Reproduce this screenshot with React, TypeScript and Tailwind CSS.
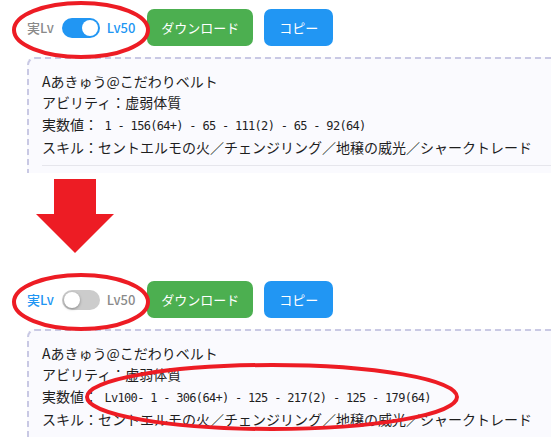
import React from 'react';

type PanelProps = {
  realLv: boolean;
  stats: string;
  height: string;
  statsMark?: boolean;
};

const ring = '#ed1c24';

function Toggle({ on }: { on: boolean }) {
  return (
    <div
      className={
        'relative h-[20px] w-[38px] rounded-full ' + (on ? 'bg-[#2196f3]' : 'bg-[#cccccc]')
      }
    >
      <div
        className={
          'absolute top-[2px] h-[16px] w-[16px] rounded-full bg-white ' +
          (on ? 'left-[20px]' : 'left-[2px] shadow-[0_1px_3px_rgba(0,0,0,0.35)]')
        }
      />
    </div>
  );
}

function Panel({ realLv, stats, height, statsMark }: PanelProps) {
  // toggle "on" = Lv50 shown
  const on = !realLv;
  return (
    <div className={'relative w-[551px] overflow-hidden ' + height}>
      <div className="flex items-center pl-[27px] pt-[9px]">
        <span
          className={
            'text-[13px] font-medium leading-[20px] ' + (realLv ? 'text-[#2196f3]' : 'text-[#8a8a8a]')
          }
        >
          実Lv
        </span>
        <div className="ml-[8px]">
          <Toggle on={on} />
        </div>
        <span
          className={
            'ml-[7px] text-[13px] font-medium leading-[20px] ' + (on ? 'text-[#2196f3]' : 'text-[#8a8a8a]')
          }
        >
          Lv50
        </span>
        <button className="ml-[12px] h-[37px] rounded-[7px] bg-[#4caf50] px-[14px] text-[13px] text-white">
          ダウンロード
        </button>
        <button className="ml-[11px] h-[37px] rounded-[7px] bg-[#2196f3] px-[15px] text-[13px] text-white">
          コピー
        </button>
      </div>

      <div className="ml-[27px] mt-[11px] w-[560px] rounded-tl-lg border-2 border-dashed border-[#c9c9e4] bg-[#fafafe] px-[13px] pb-[20px] pt-[12px]">
        <div className="whitespace-nowrap text-[14px] leading-[21.3px] text-[#1e1e1e]">
          <div>Aあきゅう@こだわりベルト</div>
          <div>アビリティ：虚弱体質</div>
          <div className="flex items-baseline">
            <span>実数値：</span>
            <span className="whitespace-pre font-['DejaVu_Sans_Mono',monospace] text-[12px] tracking-[-0.7px]">
              {' ' + stats}
            </span>
          </div>
          <div>スキル：セントエルモの火／チェンジリング／地穣の威光／シャークトレード</div>
        </div>
        <div className="mt-[7px] h-px bg-[#e6e6ec]" />
      </div>

      <svg className="pointer-events-none absolute left-0 top-0" width="551" height="200">
        <ellipse cx="81" cy="30" rx="67" ry="27" fill="none" stroke={ring} strokeWidth="4" />
        {statsMark && (
          <ellipse cx="272" cy="125" rx="185" ry="32" fill="none" stroke={ring} strokeWidth="4" />
        )}
      </svg>
    </div>
  );
}

export default function App() {
  return (
    <div className="w-[551px] h-[445px] overflow-hidden bg-white font-['Noto_Sans_CJK_JP',sans-serif]">
      <Panel realLv={false} stats="1 - 156(64+) - 65 - 111(2) - 65 - 92(64)" height="h-[173px]" />
      <svg width="551" height="99" className="block">
        <polygon points="54,6 96,6 96,41 114,41 75,80 36,41 54,41" fill={ring} />
      </svg>
      <Panel
        realLv
        stats="Lv100- 1 - 306(64+) - 125 - 217(2) - 125 - 179(64)"
        height="h-[165px]"
        statsMark
      />
    </div>
  );
}
